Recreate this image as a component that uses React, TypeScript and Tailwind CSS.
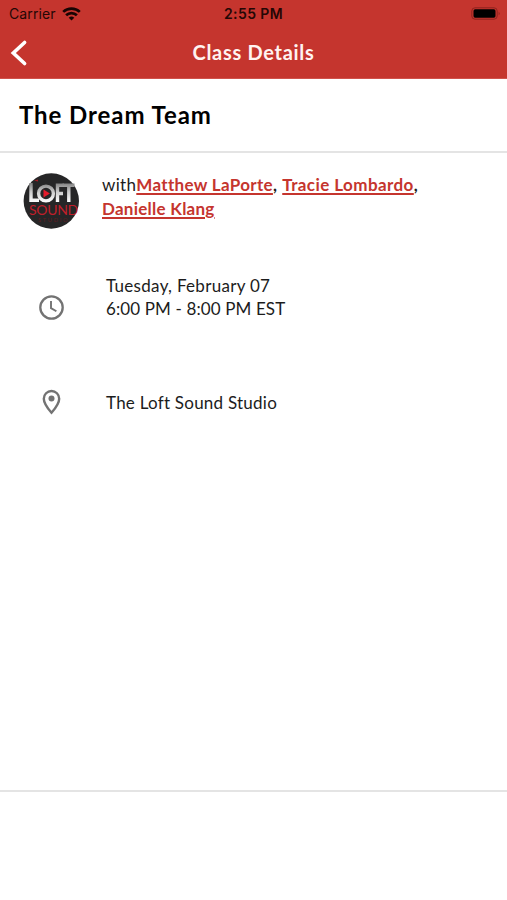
import React from 'react';

const Person = ({ children, className = '' }: { children: React.ReactNode; className?: string }) => (
  <a className={`font-bold text-[#c5352e] underline decoration-[1.5px] underline-offset-[2px] ${className}`}>{children}</a>
);

function StatusBar() {
  return (
    <div className="grid h-[27px] grid-cols-3 items-center text-[#240705] font-['Inter',sans-serif]">
      <div className="flex items-center pl-[9px]">
        <span className="text-[14px] leading-none tracking-[0.1px]">Carrier</span>
        <svg className="ml-[6px] h-[14px] w-[19px]" viewBox="0 0 19 14" fill="none" stroke="#180403" strokeWidth="2.7">
          <path d="M1.2 4.9a12 12 0 0 1 16.6 0" />
          <path d="M4.1 8.3a7.8 7.8 0 0 1 10.8 0" />
          <path d="M9.5 13.6 6.7 10.8a4.1 4.1 0 0 1 5.6 0Z" fill="#180403" stroke="none" />
        </svg>
      </div>
      <span className="text-center text-[14px] font-semibold leading-none tracking-[0.4px]">2:55 PM</span>
      <div className="flex justify-end pr-[6px]">
        <svg className="h-[13px] w-[30px]" viewBox="0 0 30 13">
          <rect x="0.8" y="0.8" width="25.4" height="11.4" rx="3.2" fill="none" stroke="#8e231e" />
          <rect x="2.5" y="2.3" width="22" height="8.4" rx="1.6" fill="#000" />
          <path d="M27.7 4.7q2 1.8 0 3.6Z" fill="#8e231e" />
        </svg>
      </div>
    </div>
  );
}

function Logo() {
  return (
    <svg className="size-[56px] shrink-0 overflow-visible" viewBox="0 0 56 56">
      <defs>
        <linearGradient id="metal" gradientUnits="userSpaceOnUse" x1="0" y1="9" x2="0" y2="29">
          <stop offset="0" stopColor="#777" />
          <stop offset="0.5" stopColor="#ccc" />
          <stop offset="1" stopColor="#fff" />
        </linearGradient>
      </defs>
      <circle cx="28.3" cy="28" r="27.7" fill="#262627" />
      <g fill="none" stroke="url(#metal)" strokeWidth="3.4">
        <path d="M8 10v17.3h8" />
        <circle cx="23" cy="20.5" r="7.4" />
        <path d="M34.5 29V12.2H41M35 20.5h5" />
        <path d="M39.500 12.200h12M45.800 12v17" />
      </g>
      <path d="M20.5 16.5v8l6.4-4Z" fill="#e51b2b" />
      <path d="M11 7.5l4-1v2Z" fill="#a31c25" />
      <text x="6" y="42" className="text-[14px] tracking-[-0.3px]" fill="#c01f2a" fontFamily="Lato, sans-serif">SOUND</text>
      <text x="15" y="49" className="text-[5.5px] tracking-[1.8px]" fill="#651a20" fontFamily="Lato, sans-serif">STUDIO</text>
    </svg>
  );
}

export default function App() {
  return (
    <div className="flex h-[900px] w-full flex-col bg-white font-['Lato',sans-serif] text-[17px] leading-[23px] text-[#1c1c1c]">
      <header className="h-[79px] shrink-0 border-b border-[#d0524b] bg-[#c5352e]">
        <StatusBar />
        <div className="grid h-[51px] grid-cols-[1fr_auto_1fr] items-center">
          <svg className="ml-[10px] h-[28px] w-[18px]" viewBox="0 0 18 28" fill="none" stroke="#fff" strokeWidth="3.6" strokeLinecap="round">
            <path d="M14.6 3.500 3.300 14l11.300 10.500" />
          </svg>
          <h1 className="text-[20px] font-bold tracking-[0.7px] text-[#fff3f1]">Class Details</h1>
          <span />
        </div>
      </header>
      <div className="flex h-[74px] shrink-0 items-center border-b-2 border-[#e4e4e4] pb-[2px] pl-[19px]">
        <h2 className="text-[24px] font-bold tracking-[0.93px] text-black">The Dream Team</h2>
      </div>
      <main className="flex h-[639px] shrink-0 flex-col border-b-2 border-[#e4e4e4]">
        <div className="flex pl-[23px] pt-[20px]">
          <Logo />
          <p className="ml-[23px] leading-[24px] tracking-[0.32px]">
            with<Person>Matthew LaPorte</Person><b className="tracking-[0.6px]">, </b><Person className="tracking-[0.42px]">Tracie Lombardo</Person><b>,</b>
            <br />
            <Person className="tracking-[0.25px]">Danielle Klang</Person>
          </p>
        </div>
        <div className="mt-[45px] flex pl-[38px]">
          <svg className="mt-[20px] size-[27px]" viewBox="0 0 27 27" fill="none" stroke="#737373" strokeWidth="2.3">
            <circle cx="13.5" cy="13.5" r="11.2" />
            <path d="M13 7v7.1l5.4 3.2" strokeWidth="1.9" />
          </svg>
          <p className="ml-[41px]">
            <span className="tracking-[0.3px]">Tuesday, February 07</span>
            <br />
            <span className="tracking-[0.12px]">6:00 PM - 8:00 PM EST</span>
          </p>
        </div>
        <div className="mt-[68px] flex items-center pl-[38px]">
          <svg className="h-[26px] w-[27px]" viewBox="0 0 27 26">
            <path d="M13.5 2a7.7 7.7 0 0 0-7.7 7.7c0 5.3 7.7 14 7.7 14s7.7-8.7 7.7-14A7.7 7.7 0 0 0 13.5 2Z" fill="none" stroke="#737373" strokeWidth="2.4" />
            <circle cx="13.5" cy="9.6" r="3" fill="#737373" />
          </svg>
          <p className="ml-[41px] tracking-[0.24px]">The Loft Sound Studio</p>
        </div>
      </main>
    </div>
  );
}
